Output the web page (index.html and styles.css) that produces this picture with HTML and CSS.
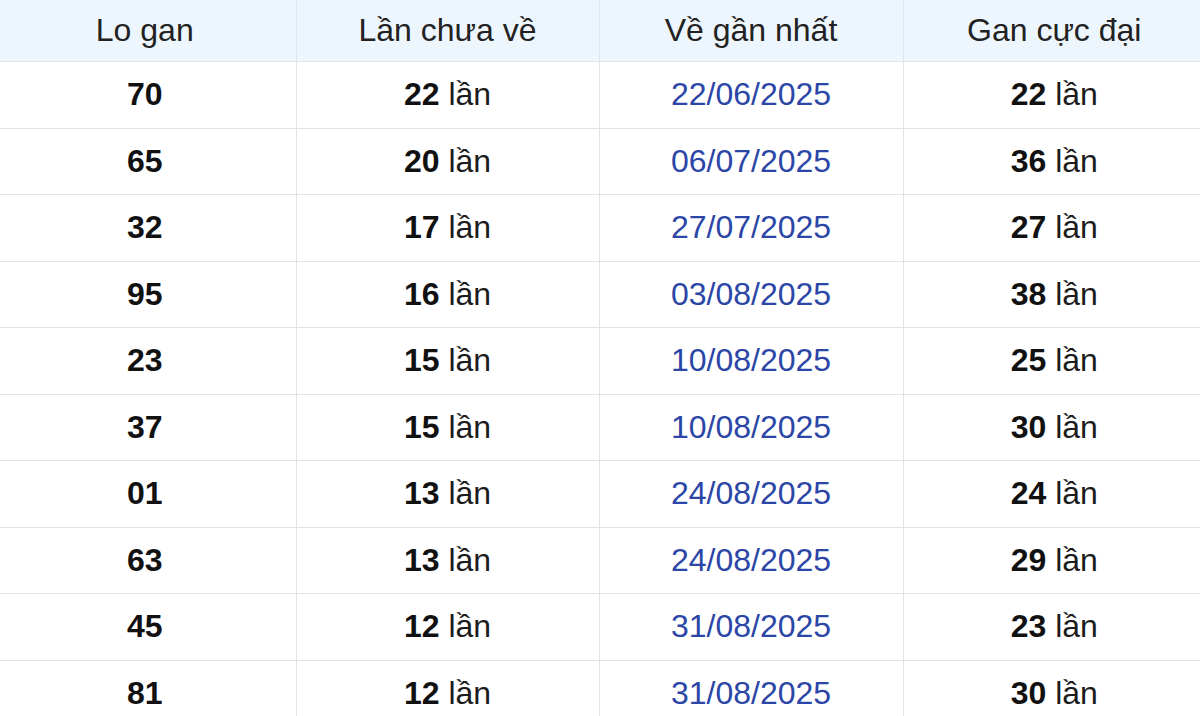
FILE: index.html
```html
<!DOCTYPE html>
<html lang="vi">
<head>
<meta charset="utf-8">
<link rel="stylesheet" href="styles.css">
</head>
<body>
<table class="gan-table">
  <colgroup>
    <col class="c1"><col class="c2"><col class="c3"><col class="c4">
  </colgroup>
  <thead>
    <tr><th>Lo gan</th><th>Lần chưa về</th><th>Về gần nhất</th><th>Gan cực đại</th></tr>
  </thead>
  <tbody>
    <tr><td><b>70</b></td><td><b>22</b> lần</td><td class="date">22/06/2025</td><td><b>22</b> lần</td></tr>
    <tr><td><b>65</b></td><td><b>20</b> lần</td><td class="date">06/07/2025</td><td><b>36</b> lần</td></tr>
    <tr><td><b>32</b></td><td><b>17</b> lần</td><td class="date">27/07/2025</td><td><b>27</b> lần</td></tr>
    <tr><td><b>95</b></td><td><b>16</b> lần</td><td class="date">03/08/2025</td><td><b>38</b> lần</td></tr>
    <tr><td><b>23</b></td><td><b>15</b> lần</td><td class="date">10/08/2025</td><td><b>25</b> lần</td></tr>
    <tr><td><b>37</b></td><td><b>15</b> lần</td><td class="date">10/08/2025</td><td><b>30</b> lần</td></tr>
    <tr><td><b>01</b></td><td><b>13</b> lần</td><td class="date">24/08/2025</td><td><b>24</b> lần</td></tr>
    <tr><td><b>63</b></td><td><b>13</b> lần</td><td class="date">24/08/2025</td><td><b>29</b> lần</td></tr>
    <tr><td><b>45</b></td><td><b>12</b> lần</td><td class="date">31/08/2025</td><td><b>23</b> lần</td></tr>
    <tr><td><b>81</b></td><td><b>12</b> lần</td><td class="date">31/08/2025</td><td><b>30</b> lần</td></tr>
  </tbody>
</table>
</body>
</html>
```
FILE: styles.css
```css
html, body {
  margin: 0;
  padding: 0;
  background: #ffffff;
  overflow: hidden;
}
body {
  font-family: "Liberation Sans", Arial, sans-serif;
  color: #1a1a1a;
}
.gan-table {
  width: 1211px;
  margin-left: -6px;
  border-collapse: collapse;
  table-layout: fixed;
  font-size: 32px;
}
.c1 { width: 302px; }
.c2 { width: 303px; }
.c3 { width: 304px; }
.c4 { width: 302px; }
.gan-table th,
.gan-table td {
  text-align: center;
  vertical-align: middle;
  padding: 0;
  border: 1px solid #e2e2e2;
}
.gan-table th:first-child,
.gan-table td:first-child { border-left: none; }
.gan-table th:last-child,
.gan-table td:last-child { border-right: none; }
.gan-table thead th {
  height: 61px;
  font-weight: normal;
  background: #eef6fd;
  color: #222222;
  border-top: none;
  border-color: #dce6ef;
}
.gan-table tbody td {
  height: 65.5px;
  color: #1c1c1c;
}
.gan-table b {
  font-weight: bold;
  color: #111111;
}
.gan-table td.date {
  color: #2b46a6;
}
```
